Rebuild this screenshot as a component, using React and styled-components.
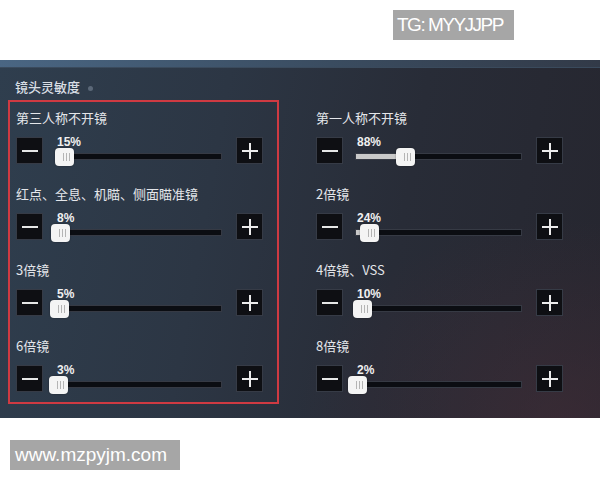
import React from "react";
import styled, { createGlobalStyle } from "styled-components";

const Global = createGlobalStyle`
  html, body { margin: 0; padding: 0; background: #fff; }
  body { width: 600px; height: 480px; overflow: hidden; font-family: "Noto Sans CJK SC", "Noto Sans", sans-serif; }
`;

const Page = styled.div`
  width: 600px;
  height: 480px;
  display: flex;
  flex-direction: column;
`;

const Header = styled.div`
  height: 60px;
  box-sizing: border-box;
  display: flex;
  justify-content: flex-end;
  align-items: flex-start;
  padding: 10px 86px 0 0;
`;

const Tag = styled.div`
  background: #a6a6a6;
  color: #fff;
  font-family: "Liberation Sans", Arial, sans-serif;
  font-size: ${(p) => p.$size || 19}px;
  letter-spacing: ${(p) => p.$ls || 0}px;
  height: 30px;
  line-height: 30px;
  width: ${(p) => p.$w}px;
  box-sizing: border-box;
  padding-left: ${(p) => p.$pl || 4}px;
  white-space: nowrap;
`;

const Panel = styled.div`
  height: 358px;
  position: relative;
  display: flex;
  flex-direction: column;
  background:
    radial-gradient(ellipse 260px 200px at 560px 360px, rgba(70, 45, 55, 0.55), rgba(70, 45, 55, 0) 100%),
    linear-gradient(100deg, #2f3e4e 0%, #2c3644 35%, #282c37 65%, #26262f 100%);
`;

const Strip = styled.div`
  height: 7px;
  background: linear-gradient(90deg, #4a6683 0%, #425a73 25%, #3a4c60 55%, #323a48 100%);
  border-bottom: 1px solid #3a4a5c;
`;

const TitleRow = styled.div`
  display: flex;
  align-items: center;
  gap: 8px;
  padding: 11px 0 0 15px;
  height: 16px;
  margin-bottom: 5px;
`;

const Title = styled.span`
  color: #d9dee4;
  font-size: 13px;
  font-weight: 500;
  line-height: 16px;
`;

const Dot = styled.span`
  width: 5px;
  height: 5px;
  border-radius: 50%;
  background: #5b6878;
  margin-top: 3px;
`;

const Columns = styled.div`
  display: flex;
  padding: 0 0 0 8px;
`;

const Column = styled.div`
  width: 271px;
  height: 304px;
  box-sizing: border-box;
  border: 2px solid ${(p) => (p.$hl ? "#cf3a42" : "transparent")};
  padding: 8px 14px 10px 6px;
  margin-right: ${(p) => (p.$hl ? 29 : 0)}px;
  display: flex;
  flex-direction: column;
  gap: 22px;
`;

const Setting = styled.div`
  display: flex;
  flex-direction: column;
  gap: 11px;
`;

const Label = styled.div`
  color: #e4e6ea;
  font-size: 13px;
  line-height: 16px;
  height: 16px;
  white-space: nowrap;
`;

const Controls = styled.div`
  display: flex;
  align-items: flex-start;
  height: 27px;
`;

const StepButton = styled.div`
  width: 27px;
  height: 27px;
  box-sizing: border-box;
  background: #0e0f13;
  border: 1px solid #363b46;
  display: flex;
  align-items: center;
  justify-content: center;
  flex-shrink: 0;
`;

const Slider = styled.div`
  width: 167px;
  margin: 0 14px 0 12px;
  display: flex;
  flex-direction: column;
`;

const Percent = styled.div`
  font-family: "Liberation Sans", Arial, sans-serif;
  font-weight: bold;
  font-size: 12px;
  line-height: 11px;
  height: 16px;
  color: #f0f0f0;
  padding-left: 2px;
`;

const Track = styled.div`
  position: relative;
  height: 7px;
  box-sizing: border-box;
  background: #0b0d12;
  border: 1px solid #363a44;
`;

const Fill = styled.div`
  position: absolute;
  left: 0;
  top: 0;
  bottom: 0;
  background: #c9c9c9;
`;

const Thumb = styled.div`
  position: absolute;
  top: -6px;
  width: 19px;
  height: 18px;
  border-radius: 4px;
  background: #f4f4f4;
  box-shadow: 0 0 2px rgba(0, 0, 0, 0.4);
  display: flex;
  align-items: center;
  justify-content: center;
  gap: 2px;
  padding-left: 4px;
  box-sizing: border-box;
`;

const Grip = styled.span`
  width: 1px;
  height: 8px;
  background: #b4b4b4;
`;

const Footer = styled.div`
  padding: 22px 0 0 10px;
`;

const Minus = () => (
  <svg width="18" height="18" viewBox="0 0 18 18">
    <line x1="1" y1="9" x2="17" y2="9" stroke="#e6e6e6" strokeWidth="2" />
  </svg>
);

const Plus = () => (
  <svg width="18" height="18" viewBox="0 0 18 18">
    <line x1="1" y1="9" x2="17" y2="9" stroke="#ececec" strokeWidth="2" />
    <line x1="9" y1="1" x2="9" y2="17" stroke="#ececec" strokeWidth="2" />
  </svg>
);

const left = [
  { label: "第三人称不开镜", value: 15 },
  { label: "红点、全息、机瞄、侧面瞄准镜", value: 8 },
  { label: "3倍镜", value: 5 },
  { label: "6倍镜", value: 3 },
];

const right = [
  { label: "第一人称不开镜", value: 88 },
  { label: "2倍镜", value: 24 },
  { label: "4倍镜、VSS", value: 10 },
  { label: "8倍镜", value: 2 },
];

function SettingRow({ label, value }) {
  const pos = -9 + 0.56 * value;
  return (
    <Setting>
      <Label>{label}</Label>
      <Controls>
        <StepButton>
          <Minus />
        </StepButton>
        <Slider>
          <Percent>{value}%</Percent>
          <Track>
            <Fill style={{ width: Math.max(0, pos + 9) + "px" }} />
            <Thumb style={{ left: pos + "px" }}>
              <Grip />
              <Grip />
              <Grip />
            </Thumb>
          </Track>
        </Slider>
        <StepButton>
          <Plus />
        </StepButton>
      </Controls>
    </Setting>
  );
}

export default function App() {
  return (
    <Page>
      <Global />
      <Header>
        <Tag $w={121} $ls={-1.5}>TG: MYYJJPP</Tag>
      </Header>
      <Panel>
        <Strip />
        <TitleRow>
          <Title>镜头灵敏度</Title>
          <Dot />
        </TitleRow>
        <Columns>
          <Column $hl>
            {left.map((s) => (
              <SettingRow key={s.label} {...s} />
            ))}
          </Column>
          <Column>
            {right.map((s) => (
              <SettingRow key={s.label} {...s} />
            ))}
          </Column>
        </Columns>
      </Panel>
      <Footer>
        <Tag $w={170} $pl={5}>www.mzpyjm.com</Tag>
      </Footer>
    </Page>
  );
}
